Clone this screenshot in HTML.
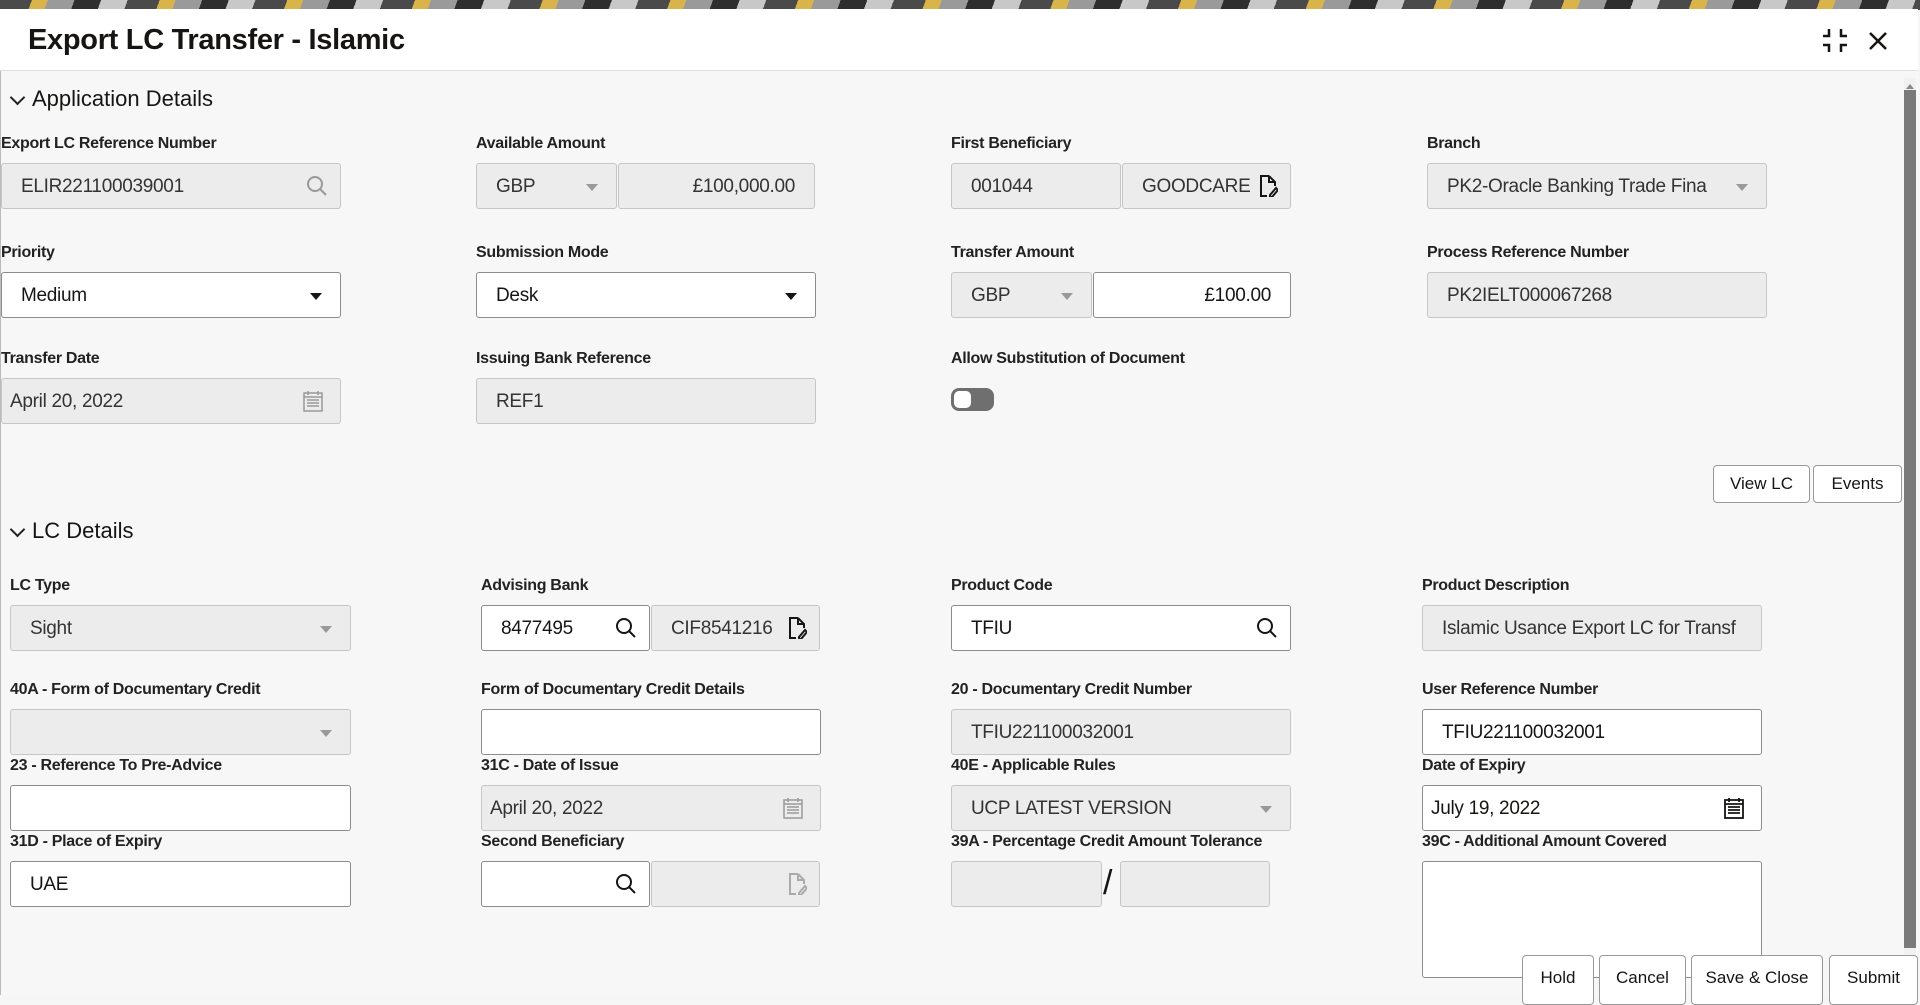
<!DOCTYPE html>
<html><head><meta charset="utf-8"><style>
*{box-sizing:border-box;margin:0;padding:0}
body{width:1920px;height:995px;overflow:hidden;background:#f6f6f6;font-family:"Liberation Sans Narrow","Liberation Sans",sans-serif;color:#161513;position:relative}
.top{position:absolute;left:0;top:0;width:1920px;height:10px;background:repeating-linear-gradient(110deg,#4a4a4a 0 30px,#d9b44a 30px 45px,#9a9a9a 45px 70px,#2e2e2e 70px 95px,#c8c8c8 95px 120px)}
.modal{position:absolute;left:0;top:9px;width:1918px;height:986px;background:#f7f7f7;border-left:1px solid #bbb;border-top:1px solid #ccc}
.hdr{position:absolute;left:0;top:9px;width:1918px;height:62px;background:#fff;border-bottom:1px solid #e0e0e0}
.title{position:absolute;left:28px;top:24px;font-size:29px;font-weight:bold;letter-spacing:-0.3px}
.sec{position:absolute;font-size:22px;}
.sec:before{content:"";position:absolute;left:-20px;top:6px;width:9px;height:9px;border-right:2px solid #222;border-bottom:2px solid #222;transform:rotate(45deg)}
.lbl{position:absolute;font-size:16px;font-weight:bold;color:#222;white-space:nowrap;letter-spacing:-0.3px;margin-top:1px}
.in{position:absolute;height:46px;border:1px solid #c6c6c6;background:#ececec;border-radius:3px;font-size:19px;color:#333;padding:0 19px;line-height:46px;white-space:nowrap;overflow:hidden;letter-spacing:-0.3px}
.w{background:#fff;border-color:#8c8c8c;color:#161513}
.r{text-align:right}
.ic{position:absolute;top:50%;transform:translateY(-50%)}
.dd:after{content:"";position:absolute;right:18px;top:20px;border:6px solid transparent;border-top:7px solid #999;border-bottom:0}
.dd.k:after{border-top-color:#161513}
.btn{position:absolute;height:38px;border:1px solid #999;background:#fff;border-radius:4px;font-size:17px;text-align:center;line-height:36px}
</style></head><body>
<div class="top"></div>
<div class="modal"></div>
<div class="hdr"></div>
<div class="title">Export LC Transfer - Islamic</div>
<svg style="position:absolute;left:1822px;top:28px" width="26" height="25" viewBox="0 0 26 25" fill="none" stroke="#161513" stroke-width="2.5"><path d="M7 1v7H1M19 1v7h6M7 24v-7H1M19 24v-7h6"/></svg>
<svg style="position:absolute;left:1869px;top:32px" width="18" height="18" viewBox="0 0 18 18" stroke="#161513" stroke-width="2.5"><path d="M1 1l16 16M17 1L1 17"/></svg>
<div style="position:absolute;left:1904px;top:78px;width:12px;height:917px;background:#f1f1f1"></div>
<div style="position:absolute;left:1906px;top:80px;border:4px solid transparent;border-bottom:5px solid #888"></div>
<div style="position:absolute;left:1904px;top:90px;width:12px;height:858px;background:#7a7a7a"></div>

<div class="sec" style="left:32px;top:86px">Application Details</div>
<div class="lbl" style="left:1px;top:134px">Export LC Reference Number</div>
<div class="lbl" style="left:476px;top:134px">Available Amount</div>
<div class="lbl" style="left:951px;top:134px">First Beneficiary</div>
<div class="lbl" style="left:1427px;top:134px">Branch</div>
<div class="in" style="left:1px;top:163px;width:340px">ELIR221100039001<svg class="ic" style="right:12px" width="22" height="22" viewBox="0 0 22 22" fill="none" stroke="#999" stroke-width="2"><circle cx="9" cy="9" r="7"/><path d="M14 14l6 6"/></svg></div>
<div class="in dd" style="left:476px;top:163px;width:141px">GBP</div>
<div class="in r" style="left:618px;top:163px;width:197px">£100,000.00</div>
<div class="in" style="left:951px;top:163px;width:170px">001044</div>
<div class="in" style="left:1122px;top:163px;width:169px">GOODCARE<svg class="ic" style="right:12px" width="18" height="22" viewBox="0 0 18 22" fill="none" stroke="#161513" stroke-width="2"><path d="M9 1H1v20h6M9 1l6 6v4M9 1v6h6M10 20l6-7 2 2-6 7h-2z"/></svg></div>
<div class="in dd" style="left:1427px;top:163px;width:340px">PK2-Oracle Banking Trade Fina</div>

<div class="lbl" style="left:1px;top:243px">Priority</div>
<div class="lbl" style="left:476px;top:243px">Submission Mode</div>
<div class="lbl" style="left:951px;top:243px">Transfer Amount</div>
<div class="lbl" style="left:1427px;top:243px">Process Reference Number</div>
<div class="in w dd k" style="left:1px;top:272px;width:340px">Medium</div>
<div class="in w dd k" style="left:476px;top:272px;width:340px">Desk</div>
<div class="in dd" style="left:951px;top:272px;width:141px">GBP</div>
<div class="in w r" style="left:1093px;top:272px;width:198px">£100.00</div>
<div class="in" style="left:1427px;top:272px;width:340px">PK2IELT000067268</div>

<div class="lbl" style="left:1px;top:349px">Transfer Date</div>
<div class="lbl" style="left:476px;top:349px">Issuing Bank Reference</div>
<div class="lbl" style="left:951px;top:349px">Allow Substitution of Document</div>
<div class="in" style="left:1px;top:378px;width:340px;padding-left:8px">April 20, 2022<svg class="ic" style="right:17px" width="20" height="22" viewBox="0 0 20 22" fill="none" stroke="#999" stroke-width="1.5"><rect x="1" y="3" width="18" height="18"/><path d="M1 7h18M5 1v4M15 1v4M4 10h12M4 13h12M4 16h12"/></svg></div>
<div class="in" style="left:476px;top:378px;width:340px">REF1</div>
<div style="position:absolute;left:951px;top:388px;width:43px;height:23px;border-radius:8px;background:#6f6f6f"><div style="position:absolute;left:3px;top:3px;width:17px;height:17px;border-radius:5px;background:#fff"></div></div>

<div class="btn" style="left:1713px;top:465px;width:97px">View LC</div>
<div class="btn" style="left:1813px;top:465px;width:89px">Events</div>

<div class="sec" style="left:32px;top:518px">LC Details</div>
<div class="lbl" style="left:10px;top:576px">LC Type</div>
<div class="lbl" style="left:481px;top:576px">Advising Bank</div>
<div class="lbl" style="left:951px;top:576px">Product Code</div>
<div class="lbl" style="left:1422px;top:576px">Product Description</div>
<div class="in dd" style="left:10px;top:605px;width:341px">Sight</div>
<div class="in w" style="left:481px;top:605px;width:169px">8477495<svg class="ic" style="right:12px" width="22" height="22" viewBox="0 0 22 22" fill="none" stroke="#161513" stroke-width="2"><circle cx="9" cy="9" r="7"/><path d="M14 14l6 6"/></svg></div>
<div class="in" style="left:651px;top:605px;width:169px">CIF8541216<svg class="ic" style="right:12px" width="18" height="22" viewBox="0 0 18 22" fill="none" stroke="#161513" stroke-width="2"><path d="M9 1H1v20h6M9 1l6 6v4M9 1v6h6M10 20l6-7 2 2-6 7h-2z"/></svg></div>
<div class="in w" style="left:951px;top:605px;width:340px">TFIU<svg class="ic" style="right:12px" width="22" height="22" viewBox="0 0 22 22" fill="none" stroke="#161513" stroke-width="2"><circle cx="9" cy="9" r="7"/><path d="M14 14l6 6"/></svg></div>
<div class="in" style="left:1422px;top:605px;width:340px">Islamic Usance Export LC for Transf</div>

<div class="lbl" style="left:10px;top:680px">40A - Form of Documentary Credit</div>
<div class="lbl" style="left:481px;top:680px">Form of Documentary Credit Details</div>
<div class="lbl" style="left:951px;top:680px">20 - Documentary Credit Number</div>
<div class="lbl" style="left:1422px;top:680px">User Reference Number</div>
<div class="in dd" style="left:10px;top:709px;width:341px"></div>
<div class="in w" style="left:481px;top:709px;width:340px"></div>
<div class="in" style="left:951px;top:709px;width:340px">TFIU221100032001</div>
<div class="in w" style="left:1422px;top:709px;width:340px">TFIU221100032001</div>

<div class="lbl" style="left:10px;top:756px">23 - Reference To Pre-Advice</div>
<div class="lbl" style="left:481px;top:756px">31C - Date of Issue</div>
<div class="lbl" style="left:951px;top:756px">40E - Applicable Rules</div>
<div class="lbl" style="left:1422px;top:756px">Date of Expiry</div>
<div class="in w" style="left:10px;top:785px;width:341px"></div>
<div class="in" style="left:481px;top:785px;width:340px;padding-left:8px">April 20, 2022<svg class="ic" style="right:17px" width="20" height="22" viewBox="0 0 20 22" fill="none" stroke="#999" stroke-width="1.5"><rect x="1" y="3" width="18" height="18"/><path d="M1 7h18M5 1v4M15 1v4M4 10h12M4 13h12M4 16h12"/></svg></div>
<div class="in dd" style="left:951px;top:785px;width:340px">UCP LATEST VERSION</div>
<div class="in w" style="left:1422px;top:785px;width:340px;padding-left:8px">July 19, 2022<svg class="ic" style="right:17px" width="20" height="22" viewBox="0 0 20 22" fill="none" stroke="#161513" stroke-width="1.8"><rect x="1" y="3" width="18" height="18"/><path d="M1 7h18M5 1v4M15 1v4M4 10h12M4 13h12M4 16h12"/></svg></div>

<div class="lbl" style="left:10px;top:832px">31D - Place of Expiry</div>
<div class="lbl" style="left:481px;top:832px">Second Beneficiary</div>
<div class="lbl" style="left:951px;top:832px">39A - Percentage Credit Amount Tolerance</div>
<div class="lbl" style="left:1422px;top:832px">39C - Additional Amount Covered</div>
<div class="in w" style="left:10px;top:861px;width:341px">UAE</div>
<div class="in w" style="left:481px;top:861px;width:169px"><svg class="ic" style="right:12px" width="22" height="22" viewBox="0 0 22 22" fill="none" stroke="#161513" stroke-width="2"><circle cx="9" cy="9" r="7"/><path d="M14 14l6 6"/></svg></div>
<div class="in" style="left:651px;top:861px;width:169px"><svg class="ic" style="right:12px" width="18" height="22" viewBox="0 0 18 22" fill="none" stroke="#aaa" stroke-width="2"><path d="M9 1H1v20h6M9 1l6 6v4M9 1v6h6M10 20l6-7 2 2-6 7h-2z"/></svg></div>
<div class="in" style="left:951px;top:861px;width:151px"></div>
<div style="position:absolute;left:1103px;top:864px;font-size:34px">/</div>
<div class="in" style="left:1120px;top:861px;width:150px"></div>
<div class="in w" style="left:1422px;top:861px;width:340px;height:117px"></div>

<div class="btn" style="left:1522px;top:955px;width:72px;height:50px;line-height:44px">Hold</div>
<div class="btn" style="left:1599px;top:955px;width:87px;height:50px;line-height:44px">Cancel</div>
<div class="btn" style="left:1691px;top:955px;width:132px;height:50px;line-height:44px">Save &amp; Close</div>
<div class="btn" style="left:1829px;top:955px;width:89px;height:50px;line-height:44px">Submit</div>
</body></html>
